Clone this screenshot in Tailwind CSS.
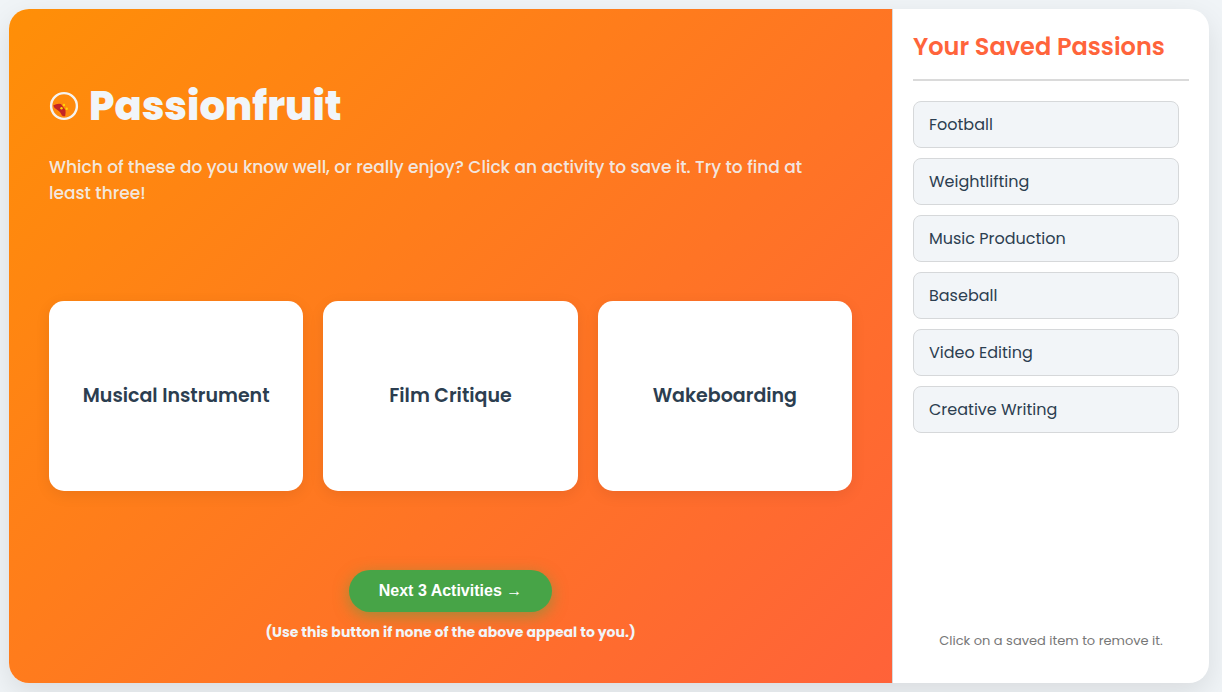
<!DOCTYPE html>
<html lang="en">
<head>
<meta charset="utf-8">
<meta name="viewport" content="width=device-width, initial-scale=1">
<title>Passionfruit</title>
<script src="https://cdn.jsdelivr.net/npm/@tailwindcss/browser@4"></script>
</head>
<body class="flex min-h-screen bg-[#f0f4f7] py-[9px] pr-[13px] pl-[9px] font-[Poppins,Inter,sans-serif] text-[#2c3e50]">
<div class="flex flex-1 overflow-hidden rounded-[20px] bg-white shadow-[0_10px_30px_rgba(0,0,0,0.1)]">
  <main class="flex flex-1 flex-col bg-[linear-gradient(135deg,#ff8f07,#ff6239)] px-10 pt-[67px] pb-10">
    <header>
      <h1 class="flex items-center gap-[10px] text-[40px] leading-[60px] font-extrabold text-[#f1f5f9]">
        <svg class="size-[30px]" viewBox="0 0 30 30" aria-hidden="true">
          <circle cx="15" cy="15" r="12.900" fill="none" stroke="#f5f3f0" stroke-width="2.400"/>
          <path d="M4.200 14.400Q8 12.300 12 13L15 17L16.500 19Q16.800 22 16.200 25Q14.500 25.800 13 24.500Q11.500 20.500 8.500 19Q5 17.500 4.200 14.400Z" fill="#c42423"/>
          <circle cx="12.500" cy="17.300" r="1.200" fill="#ffd40a"/>
          <circle cx="15" cy="14" r="1.200" fill="#ffd40a"/>
          <circle cx="17.700" cy="17.800" r="1.200" fill="#ffd40a"/>
        </svg>
        Passionfruit
      </h1>
      <p class="mt-[18px] pr-5 text-[17px] leading-[26px] font-medium text-[#f1f5f9]/90">Which of these do you know well, or really enjoy? Click an activity to save it. Try to find at least three!</p>
    </header>
    <section class="flex flex-1 items-center pt-4" aria-label="Activities">
      <div class="grid flex-1 grid-cols-3 gap-5">
        <button class="h-[190px] rounded-[15px] bg-white text-[19px] font-semibold shadow-[0_4px_15px_rgba(0,0,0,0.08)]">Musical Instrument</button>
        <button class="h-[190px] rounded-[15px] bg-white text-[19px] font-semibold shadow-[0_4px_15px_rgba(0,0,0,0.08)]">Film Critique</button>
        <button class="h-[190px] rounded-[15px] bg-white text-[19px] font-semibold shadow-[0_4px_15px_rgba(0,0,0,0.08)]">Wakeboarding</button>
      </div>
    </section>
    <footer class="flex flex-col items-center">
      <button class="flex h-[42px] items-center rounded-full bg-[#47a447] px-[30px] font-['Liberation_Sans',Arial,sans-serif] text-[16px] font-bold text-white shadow-[0_4px_15px_rgba(71,164,71,0.5)]">Next 3 Activities →</button>
      <p class="mt-[10px] text-[14px] leading-[21px] font-bold text-[#f1f5f9]">(Use this button if none of the above appeal to you.)</p>
    </footer>
  </main>
  <aside class="flex w-[317px] flex-col border-l border-[#d8dadc] p-5">
    <h2 class="border-b-2 border-[#dadada] pb-[14px] text-[24px] leading-9 font-semibold text-[#ff643b]">Your Saved Passions</h2>
    <ul class="mt-5 flex flex-1 flex-col gap-[10px] pr-[10px]">
      <li><button class="h-[47px] w-full rounded-lg border border-[#d6d8da] bg-[#f2f5f8] px-[15px] text-left text-[16px]">Football</button></li>
      <li><button class="h-[47px] w-full rounded-lg border border-[#d6d8da] bg-[#f2f5f8] px-[15px] text-left text-[16px]">Weightlifting</button></li>
      <li><button class="h-[47px] w-full rounded-lg border border-[#d6d8da] bg-[#f2f5f8] px-[15px] text-left text-[16px]">Music Production</button></li>
      <li><button class="h-[47px] w-full rounded-lg border border-[#d6d8da] bg-[#f2f5f8] px-[15px] text-left text-[16px]">Baseball</button></li>
      <li><button class="h-[47px] w-full rounded-lg border border-[#d6d8da] bg-[#f2f5f8] px-[15px] text-left text-[16px]">Video Editing</button></li>
      <li><button class="h-[47px] w-full rounded-lg border border-[#d6d8da] bg-[#f2f5f8] px-[15px] text-left text-[16px]">Creative Writing</button></li>
    </ul>
    <p class="mb-3 text-center text-[13px] leading-5 text-[#777777]">Click on a saved item to remove it.</p>
  </aside>
</div>
</body>
</html>
